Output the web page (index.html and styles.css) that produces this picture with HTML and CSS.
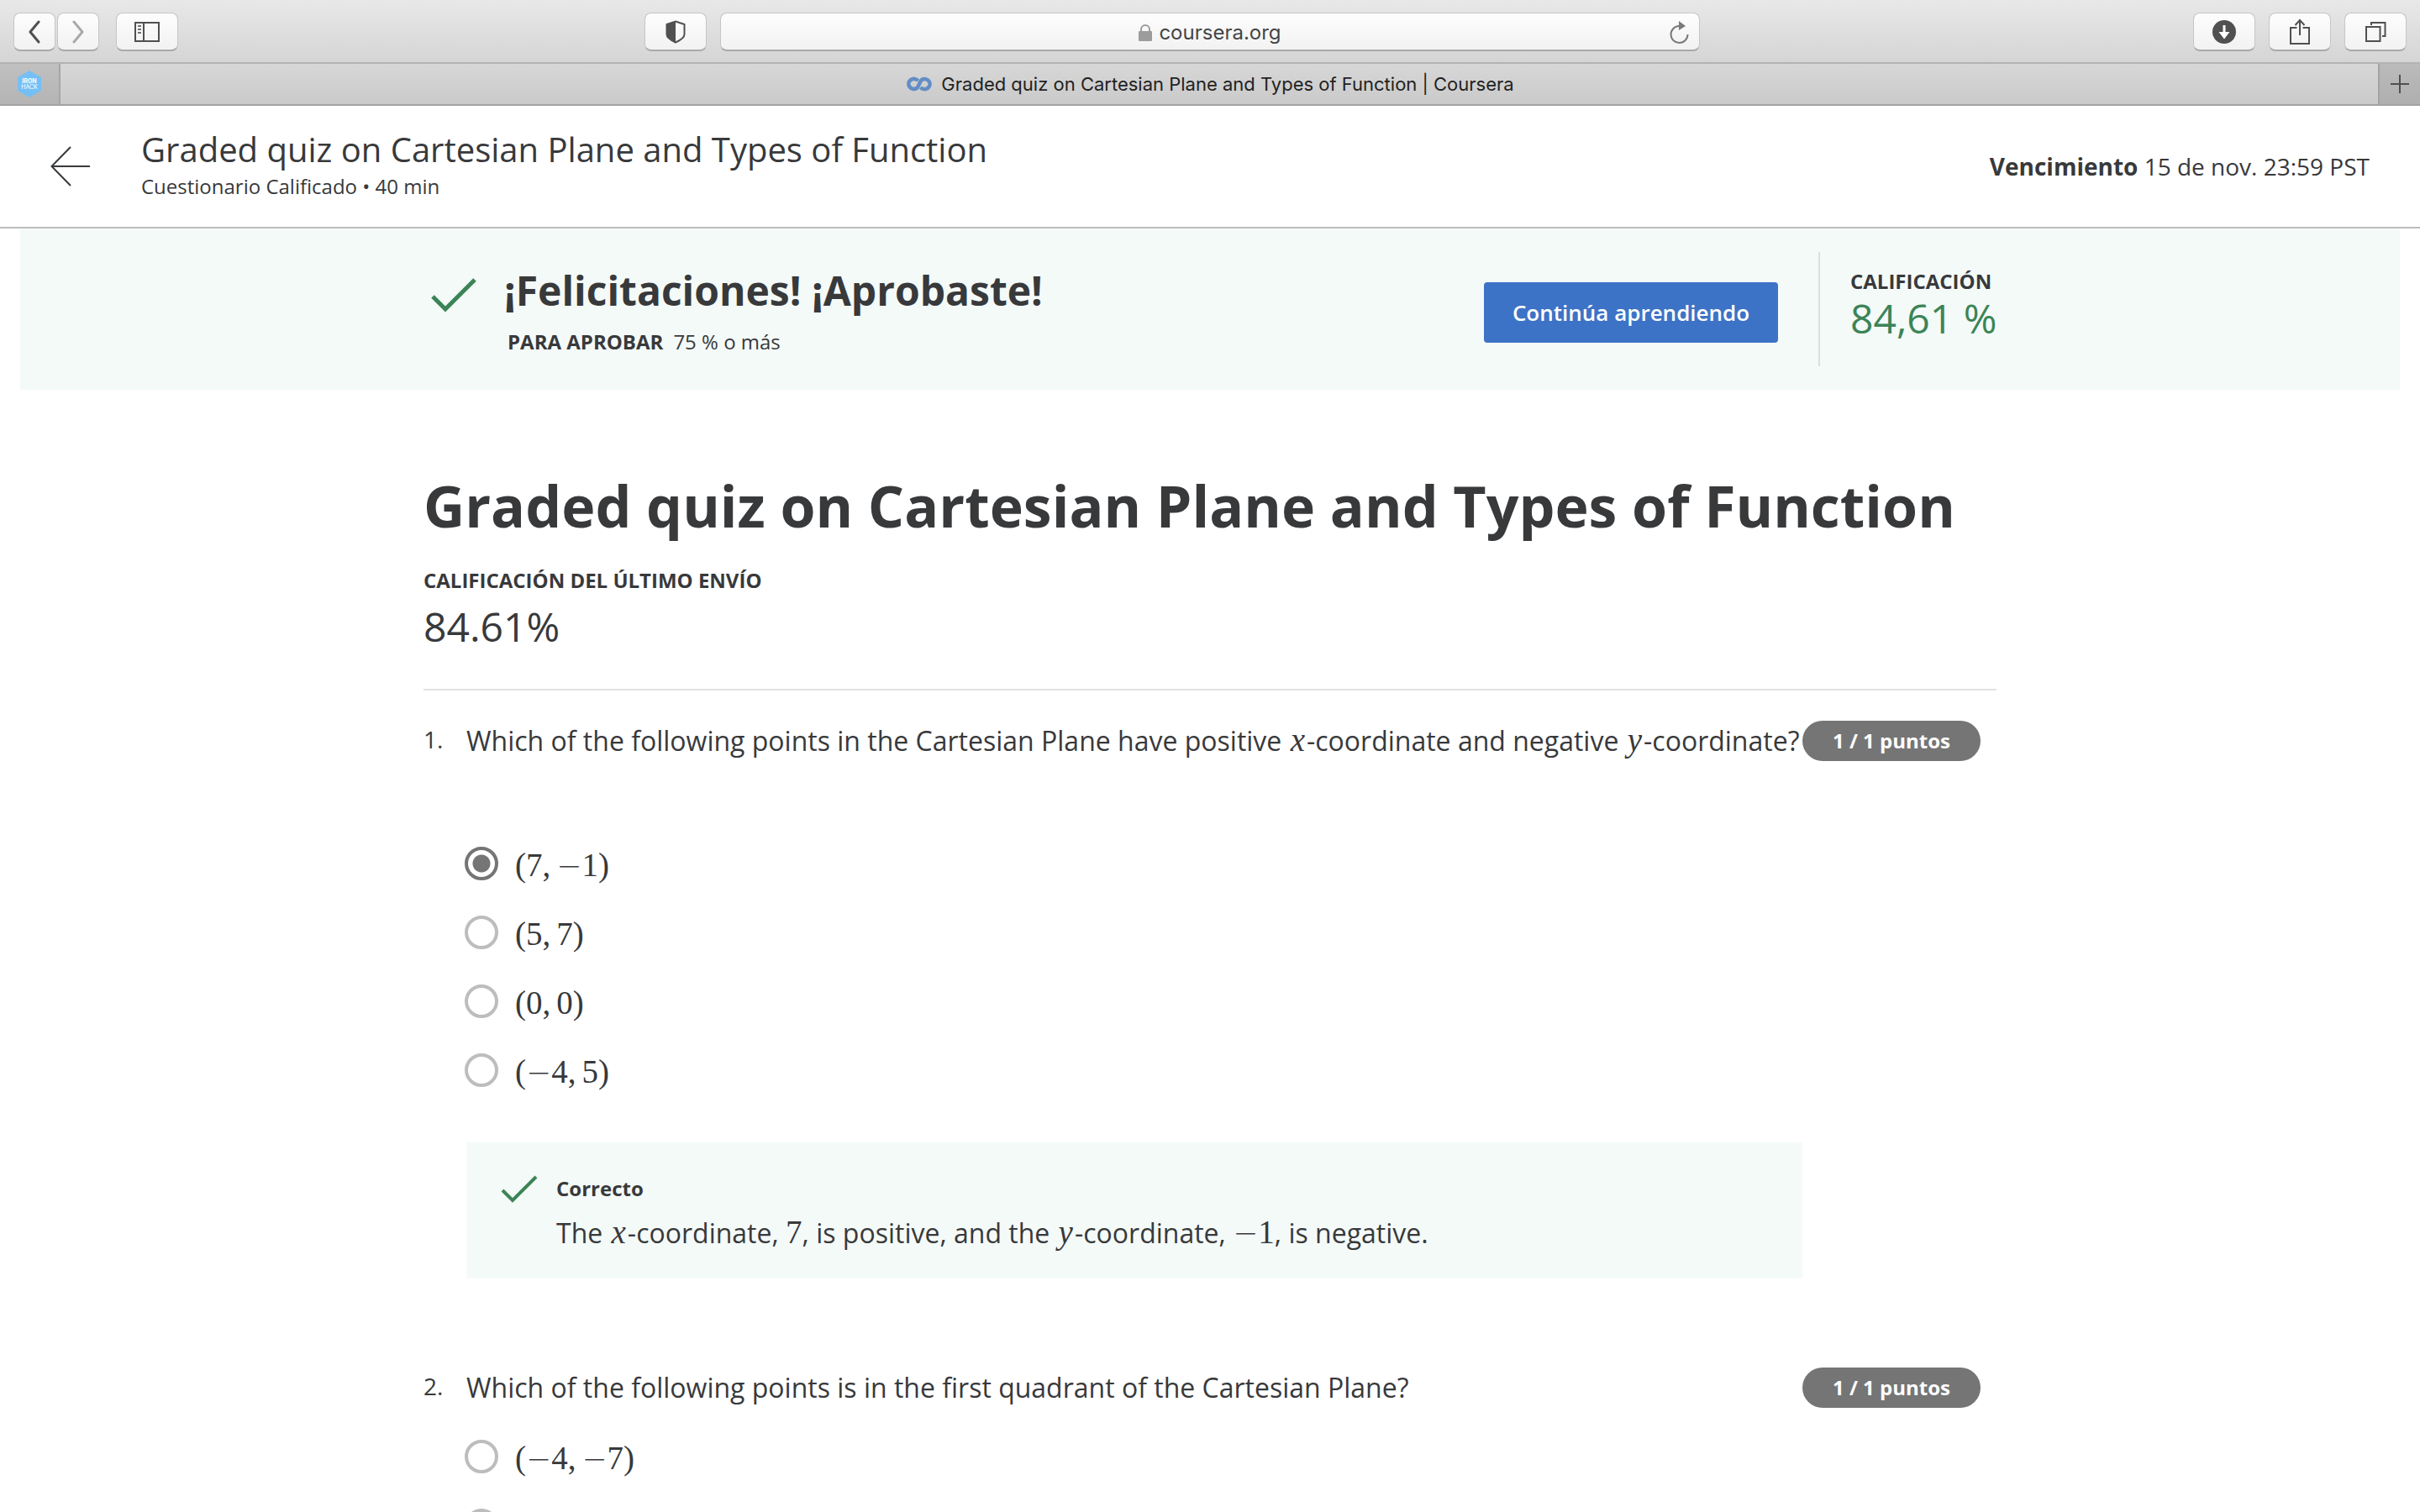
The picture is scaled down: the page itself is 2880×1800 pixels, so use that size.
FILE: index.html
```html
<!DOCTYPE html>
<html lang="es">
<head>
<meta charset="utf-8">
<title>Graded quiz on Cartesian Plane and Types of Function | Coursera</title>
<link rel="stylesheet" href="styles.css">
</head>
<body>
<div class="browser">
  <div class="toolbar">
    <div class="toolbar-side">
      <div class="nav-pair">
        <button class="tool tool-narrow" aria-label="Atrás"><svg width="16" height="28" viewBox="0 0 16 28"><path d="M13 2 3 14l10 12" fill="none" stroke="#505050" stroke-width="3" stroke-linecap="round" stroke-linejoin="round"/></svg></button>
        <button class="tool tool-narrow" aria-label="Adelante"><svg width="16" height="28" viewBox="0 0 16 28"><path d="m3 2 10 12L3 26" fill="none" stroke="#a9a9a9" stroke-width="3" stroke-linecap="round" stroke-linejoin="round"/></svg></button>
      </div>
      <button class="tool" aria-label="Barra lateral"><svg width="30" height="24" viewBox="0 0 30 24"><path d="M1 1h28v22H1zM11 1v22" fill="none" stroke="#505050" stroke-width="2"/><path d="M4 5h4M4 9h4M4 13h4" stroke="#707070" stroke-width="2"/></svg></button>
    </div>
    <div class="toolbar-center">
      <button class="tool" aria-label="Informe de privacidad"><svg width="24" height="28" viewBox="0 0 24 28"><path d="M12 1.500 22.500 5v12c0 4-5 7-10.500 9.500C6.500 24 1.500 21 1.500 17V5z" fill="none" stroke="#505050" stroke-width="2"/><path d="M12 1.500v25C6.500 24 1.500 21 1.500 17V5z" fill="#505050"/></svg></button>
      <div class="address">
        <div class="address-text">
          <svg width="16" height="20" viewBox="0 0 16 20"><rect y="8" width="16" height="12" rx="1" fill="#9c9c9c"/><path d="M3 9V6a5 5 0 0 1 10 0v3" fill="none" stroke="#9c9c9c" stroke-width="2"/></svg>
          <span>coursera.org</span>
        </div>
        <button class="reload" aria-label="Volver a cargar"><svg width="24" height="28" viewBox="0 0 24 28"><path d="M12 6a10 10 0 1 0 10.500 10" fill="none" stroke="#7a7a7a" stroke-width="2"/><path d="M12 0v11l8-5z" fill="#7a7a7a"/></svg></button>
      </div>
    </div>
    <div class="toolbar-side toolbar-end">
      <button class="tool" aria-label="Descargas"><svg width="28" height="28" viewBox="0 0 28 28"><circle cx="14" cy="14" r="14" fill="#505050"/><path d="M12.500 6h3v8h5L14 22.500 7.500 14h5z" fill="#fff"/></svg></button>
      <button class="tool" aria-label="Compartir"><svg width="24" height="32" viewBox="0 0 24 32"><path d="M8.500 11H1v19h22V11h-7.500M12 20V2M6.500 8 12 2l5.500 6" fill="none" stroke="#505050" stroke-width="2"/></svg></button>
      <button class="tool" aria-label="Ver pestañas"><svg width="26" height="26" viewBox="0 0 26 26"><path d="M2 7h16.500v17H2zM8 5V2h16.500v16H21" fill="none" stroke="#505050" stroke-width="2"/></svg></button>
    </div>
  </div>
  <div class="tabs">
    <div class="pinned"><svg width="32" height="34" viewBox="0 0 32 34"><path d="m16 1 14 8v16l-14 8-14-8V9z" fill="#75bff5"/><text x="16" y="16" class="pin-strong">IRON</text><text x="16" y="23" class="pin-light">HACK</text></svg></div>
    <div class="tab">
      <svg width="32" height="18" viewBox="0 0 32 18"><path d="M14.500 5A6.300 6 0 1 0 13 14C16 11.500 16 6.500 19 4a6.300 6 0 1 1-1.500 9" fill="none" stroke="#638dc4" stroke-width="4.600"/></svg>
      <span>Graded quiz on Cartesian Plane and Types of Function | Coursera</span>
    </div>
    <button class="new-tab" aria-label="Nueva pestaña"><svg width="24" height="24" viewBox="0 0 24 24"><path d="M12 1v22M1 12h22" stroke="#505050" stroke-width="2"/></svg></button>
  </div>

  <header class="quiz-header">
    <a class="back" href="#" aria-label="Volver"><svg width="48" height="48" viewBox="0 0 48 48"><path d="M47 24H2M24 1 1.500 24 24 47" fill="none" stroke="#373a3c" stroke-width="2"/></svg></a>
    <div class="quiz-name">
      <div class="quiz-title">Graded quiz on Cartesian Plane and Types of Function</div>
      <div class="quiz-sub">Cuestionario Calificado • 40 min</div>
    </div>
    <div class="due"><b>Vencimiento</b> 15 de nov. 23:59 PST</div>
  </header>

  <main class="page">
    <section class="banner">
      <div class="banner-inner">
        <svg class="banner-check" width="56" height="44" viewBox="0 0 56 44"><path d="M3 23l15 15L53 3" fill="none" stroke="#3c8457" stroke-width="5"/></svg>
        <div class="result">
          <h2 class="result-title">¡Felicitaciones! ¡Aprobaste!</h2>
          <p class="result-pass"><b>PARA APROBAR</b><span>75 % o más</span></p>
        </div>
        <button class="continue">Continúa aprendiendo</button>
        <div class="grade">
          <div class="label">CALIFICACIÓN</div>
          <div class="grade-value">84,61 %</div>
        </div>
      </div>
    </section>

    <div class="content">
      <h1 class="title">Graded quiz on Cartesian Plane and Types of Function</h1>
      <div class="label">CALIFICACIÓN DEL ÚLTIMO ENVÍO</div>
      <div class="latest">84.61%</div>

      <section class="question question-first">
        <div class="number">1.</div>
        <div class="body">
          <p class="prompt prompt-spaced" id="q1">Which of the following points in the Cartesian Plane have positive <i class="math">x</i>-coordinate and negative <i class="math">y</i>-coordinate?</p>
          <div class="options" role="radiogroup" aria-labelledby="q1">
            <label class="option"><input type="radio" name="q1" checked><span class="math">(7<span class="comma">,</span><span class="minus">−</span>1)</span></label>
            <label class="option"><input type="radio" name="q1"><span class="math">(5<span class="comma">,</span>7)</span></label>
            <label class="option"><input type="radio" name="q1"><span class="math">(0<span class="comma">,</span>0)</span></label>
            <label class="option"><input type="radio" name="q1"><span class="math">(<span class="minus">−</span>4<span class="comma">,</span>5)</span></label>
          </div>
          <div class="feedback">
            <svg width="44" height="34" viewBox="0 0 44 34"><path d="M2 18l12 12L42 2" fill="none" stroke="#3c8457" stroke-width="4"/></svg>
            <div class="feedback-text">
              <b class="verdict">Correcto</b>
              <p class="prompt">The <i class="math">x</i>-coordinate, <span class="math">7</span>, is positive, and the <i class="math">y</i>-coordinate, <span class="math"><span class="minus">−</span>1</span>, is negative.</p>
            </div>
          </div>
        </div>
        <div class="points">1 / 1 puntos</div>
      </section>

      <section class="question">
        <div class="number">2.</div>
        <div class="body">
          <p class="prompt" id="q2">Which of the following points is in the first quadrant of the Cartesian Plane?</p>
          <div class="options" role="radiogroup" aria-labelledby="q2">
            <label class="option"><input type="radio" name="q2"><span class="math">(<span class="minus">−</span>4<span class="comma">,</span><span class="minus">−</span>7)</span></label>
            <label class="option"><input type="radio" name="q2"></label>
          </div>
        </div>
        <div class="points">1 / 1 puntos</div>
      </section>
    </div>
  </main>
</div>
</body>
</html>
```
FILE: styles.css
```css
* { box-sizing: border-box; }
body, h1, h2, p { margin: 0; }
body {
  background: #fff;
  color: #38393b;
  font-family: "Open Sans", sans-serif;
  font-size: 24px;
  line-height: 32px;
}
button { font: inherit; border: 0; padding: 0; }
svg { display: block; flex: none; }

.browser { display: flex; flex-direction: column; height: 100vh; overflow: hidden; }

/* Browser toolbar */
.toolbar {
  display: grid;
  grid-template-columns: 751px 1fr 841px;
  flex: none;
  height: 76px;
  padding: 15px 16px 0;
  background: linear-gradient(#e8e8e8, #d5d5d5);
  border-bottom: 2px solid #b3b3b3;
  font-family: Inter, sans-serif;
}
.toolbar-side { display: flex; gap: 20px; }
.toolbar-end { justify-content: flex-end; gap: 16px; }
.toolbar-center { display: flex; gap: 16px; }
.nav-pair { display: flex; gap: 2px; }
.tool, .address {
  display: flex;
  align-items: center;
  justify-content: center;
  height: 46px;
  background: linear-gradient(#fdfdfd, #f2f2f2);
  border: 1px solid #c6c6c6;
  border-bottom: 2px solid #a9a9a9;
  border-radius: 8px;
}
.tool { width: 74px; }
.tool-narrow { width: 50px; }
.address { flex: 1; padding: 2px 12px 0 36px; }
.address-text { display: flex; flex: 1; justify-content: center; align-items: center; gap: 8px; color: #454545; }
.reload { background: none; }

/* Tab strip */
.tabs {
  display: flex;
  flex: none;
  height: 50px;
  background: linear-gradient(#d7d7d7, #cacaca);
  border-bottom: 2px solid #a3a3a3;
  font-family: Inter, sans-serif;
  font-size: 22px;
  color: #222;
}
.pinned { display: flex; align-items: center; justify-content: center; width: 72px; background: linear-gradient(#c0c0c0, #b4b4b4); border-right: 2px solid #a6a6a6; }
.pin-strong, .pin-light { fill: #fff; font-size: 7px; text-anchor: middle; }
.pin-strong { font-weight: 700; }
.tab { display: flex; flex: 1; align-items: center; justify-content: center; gap: 10px; padding-right: 22px; }
.new-tab { display: flex; align-items: center; justify-content: center; width: 50px; background: linear-gradient(#bbb, #afafaf); border-left: 2px solid #a3a3a3; }

/* Quiz header */
.quiz-header {
  display: flex;
  align-items: center;
  flex: none;
  padding: 0 60px;
  border-bottom: 2px solid #bdbdbd;
}
.quiz-name { flex: 1; padding: 26px 0 32px 60px; }
.quiz-title { padding-bottom: 2px; font-size: 40px; line-height: 52px; }
.due { font-size: 28px; line-height: 40px; }

.page { flex: 1; min-height: 0; overflow: hidden; }

/* Result banner */
.banner { margin: 0 24px; padding: 28px 0; background: #f4faf8; }
.banner-inner { display: flex; align-items: flex-start; max-width: 1872px; margin: 0 auto; }
.banner-check { margin: 30px 32px 0 8px; }
.result { flex: 1; padding-top: 14px; }
.result-title { font-size: 48px; line-height: 64px; font-weight: 700; }
.result-pass { display: flex; gap: 12px; margin-top: 13px; padding-left: 4px; }
.continue {
  width: 350px;
  height: 72px;
  margin: 36px 48px 0 0;
  border-radius: 4px;
  background: #3d73c6;
  color: #fff;
  font-size: 26px;
  font-weight: 600;
}
.grade { width: 212px; padding: 19px 0 29px 36px; border-left: 2px solid #dedede; white-space: nowrap; }
.grade-value { font-size: 48px; line-height: 56px; color: #3c8457; }
.label { font-weight: 700; }

/* Quiz content */
.content { max-width: 1872px; margin: 0 auto; padding-top: 90px; }
.title { margin-bottom: 25px; font-size: 68px; line-height: 96px; font-weight: 700; white-space: nowrap; }
.latest { padding: 7px 0 42px; border-bottom: 2px solid #e1e1e1; font-size: 48px; line-height: 64px; }

.question { display: grid; grid-template-columns: 51px 1fr 212px; margin-top: 106px; padding-right: 19px; }
.question-first { margin-top: 36px; }
.number { font-size: 28px; line-height: 44px; }
.prompt { font-size: 32px; line-height: 48px; white-space: nowrap; }
.prompt-spaced { margin-bottom: 102px; }
.points {
  height: 48px;
  border-radius: 24px;
  background: #757575;
  color: #fff;
  font-weight: 700;
  line-height: 48px;
  text-align: center;
}
.options { display: flex; flex-direction: column; gap: 42px; margin: 38px 0 0 -2px; }
.option { display: flex; gap: 20px; height: 40px; }
.option input {
  appearance: none;
  width: 40px;
  height: 40px;
  margin: 0;
  border: 4px solid #bdbdbd;
  border-radius: 50%;
}
.option input:checked { border-color: #757575; background: radial-gradient(circle, #757575 10px, transparent 11px); }
.option .math { line-height: 44px; }
.math { font-family: "Liberation Serif", serif; font-size: 39px; line-height: 32px; }
i.math { padding: 0 2px; }
.comma { padding-right: 7px; }
.minus { font-family: "DejaVu Sans Light", "DejaVu Sans", sans-serif; font-size: 36px; font-weight: 200; line-height: 32px; }

.feedback { display: flex; gap: 22px; margin-top: 66px; padding: 39px 41px 30px; background: #f4faf8; }
.feedback-text { display: flex; flex-direction: column; gap: 13px; }
```
